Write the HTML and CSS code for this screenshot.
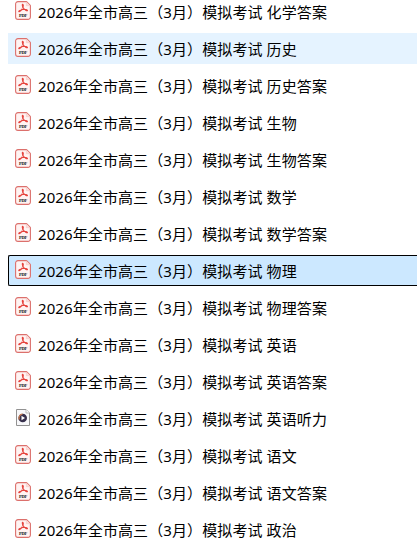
FILE: index.html
```html
<!DOCTYPE html>
<html lang="zh-CN">
<head>
  <meta charset="UTF-8">
  <meta name="viewport" content="width=device-width, initial-scale=1.0">
  <title>模拟考试</title>
  <link rel="stylesheet" href="styles.css">
</head>
<body>

  <!-- Shared icons -->
  <svg class="icon-defs">
    <symbol id="pdf" viewBox="0 0 16 19">
      <path d="M3 .6H11.5L15.4 4.5V16a2.4 2.4 0 0 1-2.4 2.4H3A2.4 2.4 0 0 1 .6 16V3A2.4 2.4 0 0 1 3 .6Z" fill="#fff3f2" stroke="#dc706c" stroke-width="1.1"/>
      <path d="M11.3 .8V4.7H15.2" fill="#fbdcda" stroke="#f2bfbd" stroke-width=".5"/>
      <path d="M7.4 3.4C8.8 3.2 8.3 5.8 7.4 7.6C6.5 9.3 5 11 4 10.7C3 10 6 8.8 8 8.5C10 8.2 12.7 8.7 12.5 9.6C12 10.3 9.5 8.8 8.6 7.4C7.8 6.2 6.8 3.7 7.4 3.4Z" fill="#e5443e" stroke="#e5443e" stroke-width="1.1"/>
      <path d="M7.7 6.8L8.3 7.8L7 8Z" fill="#fff3f2"/>
      <text x="8" y="16.4" text-anchor="middle" class="pdf-label">PDF</text>
    </symbol>
    <symbol id="media" viewBox="0 0 16 19">
      <path d="M1.5 1.5H11L14.5 5V17.5H1.5Z" fill="#f8f8fa" stroke="#929292"/>
      <path d="M11 1.5V5H14.5" fill="#fff" stroke="#aaa" stroke-width=".8"/>
      <circle cx="7.7" cy="10" r="4.3" fill="#37304c"/>
      <path d="M4.3 11.5A3.8 3.8 0 0 1 7.5 6.2" fill="none" stroke="#c47850" stroke-width="1.3"/>
      <path d="M6.5 7.7L10 10L6.5 12.3Z" fill="#fff"/>
    </symbol>
  </svg>

  <div class="file-list">
    <div class="file"><svg class="icon"><use href="#pdf"/></svg><span>2026年全市高三（3月）模拟考试 化学答案</span></div>
    <div class="file hover"><svg class="icon"><use href="#pdf"/></svg><span>2026年全市高三（3月）模拟考试 历史</span></div>
    <div class="file"><svg class="icon"><use href="#pdf"/></svg><span>2026年全市高三（3月）模拟考试 历史答案</span></div>
    <div class="file"><svg class="icon"><use href="#pdf"/></svg><span>2026年全市高三（3月）模拟考试 生物</span></div>
    <div class="file"><svg class="icon"><use href="#pdf"/></svg><span>2026年全市高三（3月）模拟考试 生物答案</span></div>
    <div class="file"><svg class="icon"><use href="#pdf"/></svg><span>2026年全市高三（3月）模拟考试 数学</span></div>
    <div class="file"><svg class="icon"><use href="#pdf"/></svg><span>2026年全市高三（3月）模拟考试 数学答案</span></div>
    <div class="file selected"><svg class="icon"><use href="#pdf"/></svg><span>2026年全市高三（3月）模拟考试 物理</span></div>
    <div class="file"><svg class="icon"><use href="#pdf"/></svg><span>2026年全市高三（3月）模拟考试 物理答案</span></div>
    <div class="file"><svg class="icon"><use href="#pdf"/></svg><span>2026年全市高三（3月）模拟考试 英语</span></div>
    <div class="file"><svg class="icon"><use href="#pdf"/></svg><span>2026年全市高三（3月）模拟考试 英语答案</span></div>
    <div class="file"><svg class="icon"><use href="#media"/></svg><span>2026年全市高三（3月）模拟考试 英语听力</span></div>
    <div class="file"><svg class="icon"><use href="#pdf"/></svg><span>2026年全市高三（3月）模拟考试 语文</span></div>
    <div class="file"><svg class="icon"><use href="#pdf"/></svg><span>2026年全市高三（3月）模拟考试 语文答案</span></div>
    <div class="file"><svg class="icon"><use href="#pdf"/></svg><span>2026年全市高三（3月）模拟考试 政治</span></div>
  </div>

</body>
</html>
```

FILE: styles.css
```css
body {
  display: flow-root;
  margin: 0;
  height: 539px;
  overflow: hidden;
  background: #fff;
  color: #000;
  font-family: "Noto Sans", "Noto Sans CJK SC", sans-serif;
  font-size: 15px;
  letter-spacing: 0.1px;
}
.icon-defs {
  display: none;
}
.file-list {
  display: flex;
  flex-direction: column;
  gap: 6px;
  margin-top: -4px;
  padding-left: 8px;
}
.file {
  display: flex;
  align-items: center;
  box-sizing: border-box;
  height: 31px;
  padding-left: 6px;
  border: 1px solid transparent;
  border-right: none;
  line-height: 29px;
  white-space: nowrap;
}
.file span {
  padding-top: 2px;
}
.file.hover {
  background: #e5f3ff;
  border-color: #e5f3ff;
}
.file.selected {
  background: #cce8ff;
  border-color: #000;
  border-radius: 2px 0 0 2px;
}
.icon {
  flex: none;
  width: 16px;
  height: 19px;
  margin: 0 7px 2px 0;
}
.pdf-label {
  font-family: "Liberation Serif", serif;
  font-size: 4.5px;
  font-weight: bold;
  letter-spacing: -0.2px;
  fill: #111;
}
```
